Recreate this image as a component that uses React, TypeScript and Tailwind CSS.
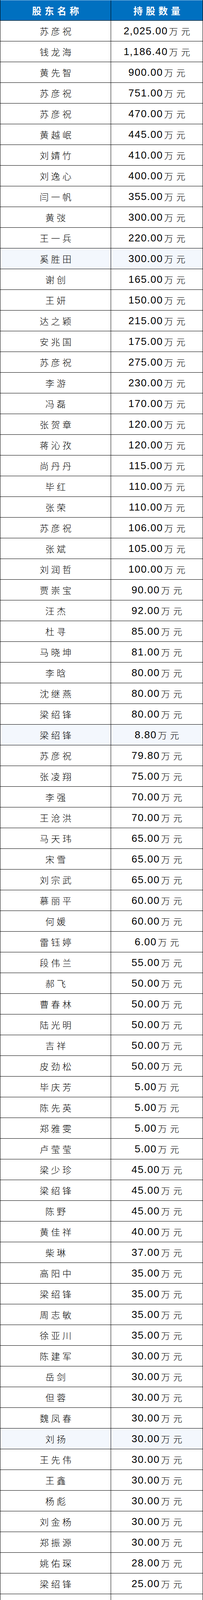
import React from 'react'

// 股东持股明细
const rows: [string, string, boolean?][] = [
  ['苏彦祝', '2,025.00'],
  ['钱龙海', '1,186.40'],
  ['黄先智', '900.00'],
  ['苏彦祝', '751.00'],
  ['苏彦祝', '470.00'],
  ['黄越岷', '445.00'],
  ['刘婧竹', '410.00'],
  ['刘逸心', '400.00'],
  ['闫一帆', '355.00'],
  ['黄弢', '300.00'],
  ['王一兵', '220.00'],
  ['奚胜田', '300.00', true],
  ['谢创', '165.00'],
  ['王妍', '150.00'],
  ['达之颖', '215.00'],
  ['安兆国', '175.00'],
  ['苏彦祝', '275.00'],
  ['李游', '230.00'],
  ['冯磊', '170.00'],
  ['张贺章', '120.00'],
  ['蒋沁孜', '120.00'],
  ['尚丹丹', '115.00'],
  ['毕红', '110.00'],
  ['张荣', '110.00'],
  ['苏彦祝', '106.00'],
  ['张斌', '105.00'],
  ['刘润哲', '100.00'],
  ['贾崇宝', '90.00'],
  ['汪杰', '92.00'],
  ['杜寻', '85.00'],
  ['马晓坤', '81.00'],
  ['李晗', '80.00'],
  ['沈继燕', '80.00'],
  ['梁绍锋', '80.00'],
  ['梁绍锋', '8.80', true],
  ['苏彦祝', '79.80'],
  ['张凌翔', '75.00'],
  ['李强', '70.00'],
  ['王沧洪', '70.00'],
  ['马天玮', '65.00'],
  ['宋雪', '65.00'],
  ['刘宗武', '65.00'],
  ['慕丽平', '60.00'],
  ['何媛', '60.00'],
  ['雷钰婷', '6.00'],
  ['段伟兰', '55.00'],
  ['郝飞', '50.00'],
  ['曹春林', '50.00'],
  ['陆光明', '50.00'],
  ['吉祥', '50.00'],
  ['皮劲松', '50.00'],
  ['毕庆芳', '5.00'],
  ['陈先英', '5.00'],
  ['郑雅雯', '5.00'],
  ['卢莹莹', '5.00'],
  ['梁少珍', '45.00'],
  ['梁绍锋', '45.00'],
  ['陈野', '45.00'],
  ['黄佳祥', '40.00'],
  ['柴琳', '37.00'],
  ['高阳中', '35.00'],
  ['梁绍锋', '35.00'],
  ['周志敏', '35.00'],
  ['徐亚川', '35.00'],
  ['陈建军', '30.00'],
  ['岳剑', '30.00'],
  ['但蓉', '30.00'],
  ['魏凤春', '30.00'],
  ['刘扬', '30.00', true],
  ['王先伟', '30.00'],
  ['王鑫', '30.00'],
  ['杨彪', '30.00'],
  ['刘金杨', '30.00'],
  ['郑振源', '30.00'],
  ['姚佑琛', '28.00'],
  ['梁绍锋', '25.00'],
  ['韩诚', '25.00'],
  ['王圣权', '25.00'],
  ['张宏夏', '25.00'],
  ['刘泉', '23.00'],
  ['李林林', '22.00'],
  ['范逸男', '22.00'],
  ['刘威', '20.00'],
  ['王康', '20.00'],
  ['金莉', '20.00'],
  ['张师旗', '16.00'],
  ['梁绍锋', '15.00'],
  ['沈琮', '15.00'],
  ['徐立豪', '15.00'],
  ['王刚', '15.00'],
  ['李抒', '15.00'],
  ['郑晓敏', '15.00'],
  ['刘兴元', '15.00'],
  ['朱海波', '15.00'],
  ['胡程程', '15.00'],
  ['穆军民', '15.00'],
  ['黄秘志', '15.00'],
  ['陈旭升', '15.00'],
  ['彭敏妍', '15.00'],
  ['李郁为', '15.00'],
  ['陈柔嘉', '13.00'],
  ['黎单', '12.00'],
  ['幸晓天', '12.00'],
  ['农光耀', '10.00'],
  ['李江', '10.00'],
  ['谭硕', '10.00'],
  ['刘钊', '10.00'],
  ['孟萌', '10.00'],
  ['刘淑婷', '10.00'],
  ['岳天嘉', '10.00'],
  ['徐嘉霖', '10.00'],
  ['武福利', '10.00'],
  ['许新', '10.00'],
  ['赖婧怡', '10.00'],
  ['王锡锋', '10.00'],
  ['刘铁庚', '10.00'],
  ['岳静', '10.00'],
  ['梁绍锋', '1.00'],
  ['苏彦祝', '1.00'],
]

const cjk = "font-['Noto_Sans_CJK_SC',sans-serif]"

export default function App() {
  return (
    <div className="w-[519px] bg-white border-l border-r border-black leading-none">
      {/* header */}
      <div className="grid grid-cols-[283px_1fr] h-[53px] bg-[#0070c0] border-t border-t-[#9dc3e6] border-b border-b-black text-white">
        <div className={`border-r border-black flex items-center justify-center whitespace-nowrap text-[24px] font-bold tracking-[8px] pl-[8px] ${cjk}`}>
          股东名称
        </div>
        <div className={`flex items-center justify-center whitespace-nowrap text-[24px] font-bold tracking-[8px] pl-[8px] ${cjk}`}>
          持股数量
        </div>
      </div>
      {rows.map(([name, amount, hl], i) => (
        <div
          key={i}
          className={`grid grid-cols-[283px_1fr] h-[53px] border-b border-black ${hl ? 'bg-[#f3f7fd]' : 'bg-white'}`}
        >
          <div className={`border-r border-black flex items-center justify-center whitespace-nowrap text-[23px] font-light text-black tracking-[6px] pl-[6px] ${cjk}`}>
            {name}
          </div>
          <div className="flex items-center justify-center whitespace-nowrap text-black">
            <span className="font-['Liberation_Sans',sans-serif] text-[26px] tracking-[1.5px]">{amount}</span>
            <span className={`text-[23px] font-light tracking-[8px] ml-[3px] mr-[-8px] ${cjk}`}>万元</span>
          </div>
        </div>
      ))}
    </div>
  )
}
